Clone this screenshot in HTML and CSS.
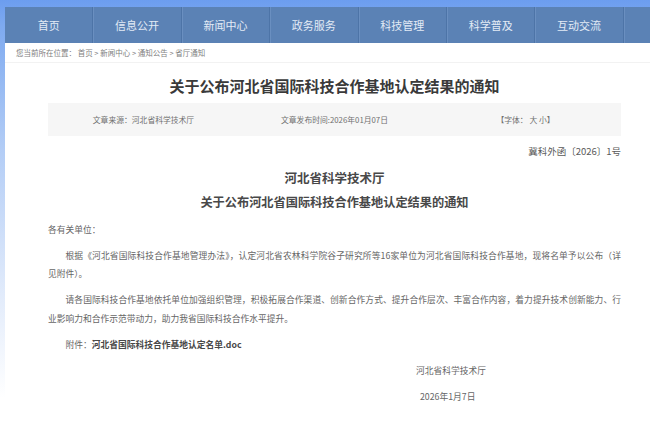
FILE: index.html
```html
<!DOCTYPE html>
<html lang="zh-CN">
<head>
<meta charset="utf-8">
<title>关于公布河北省国际科技合作基地认定结果的通知</title>
<link rel="stylesheet" href="styles.css">
</head>
<body>
<div class="page">
  <nav class="nav">
    <a class="nav-item">首页</a>
    <a class="nav-item">信息公开</a>
    <a class="nav-item">新闻中心</a>
    <a class="nav-item">政务服务</a>
    <a class="nav-item">科技管理</a>
    <a class="nav-item">科学普及</a>
    <a class="nav-item">互动交流</a>
  </nav>
  <div class="main">
    <div class="crumb">您当前所在位置： 首页 &gt; 新闻中心 &gt; 通知公告 &gt; 省厅通知</div>
    <article class="article">
      <h1 class="title">关于公布河北省国际科技合作基地认定结果的通知</h1>
      <div class="info">
        <span class="info-cell">文章来源：河北省科学技术厅</span>
        <span class="info-cell">文章发布时间:2026年01月07日</span>
        <span class="info-cell">【字体： 大 小】</span>
      </div>
      <div class="docno">冀科外函〔2026〕1号</div>
      <h2 class="subhead">河北省科学技术厅</h2>
      <h2 class="subhead sub2">关于公布河北省国际科技合作基地认定结果的通知</h2>
      <p class="line">各有关单位：</p>
      <p class="para">根据《河北省国际科技合作基地管理办法》，认定河北省农林科学院谷子研究所等16家单位为河北省国际科技合作基地，现将名单予以公布（详<span class="keep">见附件）。</span></p>
      <p class="para">请各国际科技合作基地依托单位加强组织管理，积极拓展合作渠道、创新合作方式、提升合作层次、丰富合作内容，着力提升技术创新能力、行业影响力和合作示范带动力，助力我省国际科技合作水平提升。</p>
      <p class="para">附件：<b class="attach">河北省国际科技合作基地认定名单.doc</b></p>
      <p class="sign">河北省科学技术厅</p>
      <p class="sign date">2026年1月7日</p>
    </article>
  </div>
</div>
</body>
</html>
```

FILE: styles.css
```css
* { box-sizing: border-box; }
html, body { margin: 0; padding: 0; }
body {
  font-family: "Noto Sans CJK SC", "Noto Sans", sans-serif;
  background: linear-gradient(180deg, #6c9def 0, #7eaaf0 6%, #b3cdf6 35%, #e3ecfb 70%, #ffffff 93%);
  height: 428px;
  overflow: hidden;
}
.page {
  padding: 7px 0 0 5px;
}
.nav {
  display: flex;
  height: 36px;
  background: #5b82b5;
}
.nav-item {
  width: 88.4px;
  flex: none;
  display: flex;
  align-items: center;
  justify-content: center;
  color: #e3ebf5;
  font-size: 11px;
  border-right: 1px solid #4d74a7;
  box-shadow: 1px 0 0 #6a8fc0;
}
.main {
  background: #fff;
  height: 385px;
}
.crumb {
  height: 20px;
  line-height: 20px;
  padding-left: 11px;
  font-size: 7.5px;
  color: #808080;
  border-bottom: 1px solid #f2f2f2;
}
.article {
  margin-left: 43px;
  width: 573px;
  color: #666;
}
.title {
  margin: 13px 0 0;
  text-align: center;
  font-size: 15px;
  line-height: 20px;
  font-weight: 700;
  color: #3a3a3a;
}
.info {
  margin-top: 7px;
  height: 33px;
  background: #f6f6f6;
  display: grid;
  grid-template-columns: 1fr 1fr 1fr;
  align-items: center;
  font-size: 7.8px;
  color: #707070;
}
.info-cell { text-align: center; }
.docno {
  margin-top: 7px;
  text-align: right;
  font-size: 9.5px;
  line-height: 16px;
  color: #5a5a5a;
}
.subhead {
  margin: 10px 0 0;
  text-align: center;
  font-size: 12.5px;
  line-height: 18px;
  font-weight: 700;
  color: #484848;
}
.sub2 { margin-top: 6px; font-size: 12.2px; }
.line, .para, .sign {
  margin: 7.5px 0 0;
  font-size: 8.75px;
  line-height: 18.5px;
}
.line { margin-top: 9.5px; }
.para {
  text-indent: 2em;
  text-align: justify;
}
.keep { white-space: nowrap; }
.attach { color: #484848; font-weight: 700; }
.sign { padding-left: 368px; }
.date { padding-left: 372px; margin-top: 8px; }
```
